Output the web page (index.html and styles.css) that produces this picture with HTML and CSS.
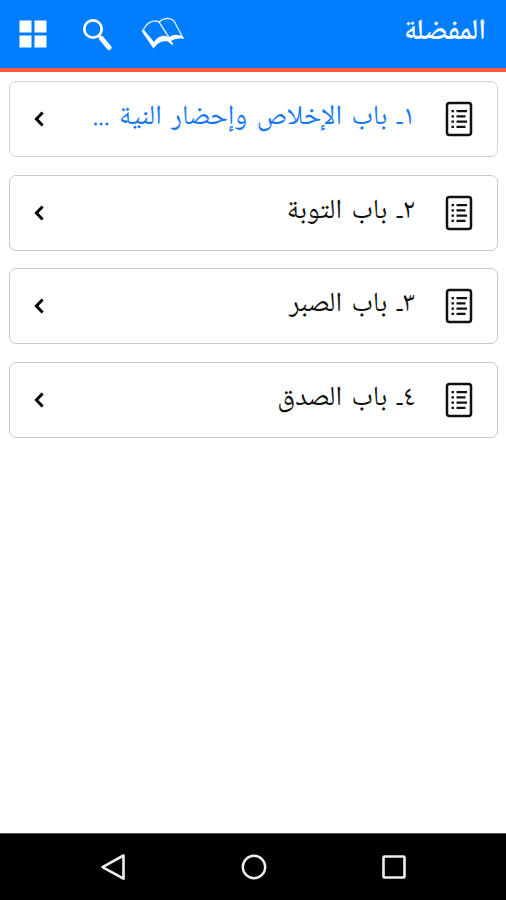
FILE: index.html
```html
<!DOCTYPE html>
<html lang="ar" dir="rtl">
<head>
<meta charset="utf-8">
<title>المفضلة</title>
<link rel="stylesheet" href="styles.css">
</head>
<body>
<svg width="0" height="0" class="defs">
  <symbol id="list" viewBox="0 0 28 36">
    <rect x="2" y="2" width="24" height="32" rx="2.5" fill="none" stroke="#111" stroke-width="2.5"/>
    <path d="M6.500 10.200h2.500M6.500 15.400h2.500M6.500 20.600h2.500M6.500 25.800h2.500M11.500 10.200h10.500M11.500 15.400h9M11.500 20.600h10.500M11.500 25.800h9" stroke="#111" stroke-width="2.300"/>
  </symbol>
  <symbol id="chevron" viewBox="0 0 12 18">
    <path d="M9.600 2.500 3.400 9l6.200 6.500" fill="none" stroke="#000" stroke-width="3"/>
  </symbol>
</svg>
<header class="bar">
  <h1 class="title">المفضلة</h1>
  <nav class="actions">
    <svg class="book" viewBox="0 0 44 34">
      <path d="M2 14C5 6 12 2 18 5C22 1 29 0 33 4L42 21M18 5l11 17M2 14l11 16" fill="none" stroke="#d6eaff" stroke-width="1.400" stroke-linejoin="round"/>
      <path d="M.5 14 3 13 13 25C17 19 23 17 28 20.500C32 17 37 17 42 20L43 22C37 21 33 22 30 24L32.500 27 31 28 27 24.500C21 23.500 17 25 12.500 31.500Z" fill="#fff"/>
    </svg>
    <svg class="search" viewBox="0 0 32 34">
      <circle cx="12" cy="12" r="8.700" fill="none" stroke="#fff" stroke-width="2.700"/>
      <path d="m18 19 2 2" stroke="#fff" stroke-width="3"/>
      <path d="m20.500 21.500 7.500 9" stroke="#fff" stroke-width="5" stroke-linecap="round"/>
    </svg>
    <svg class="grid" viewBox="0 0 28 28">
      <path d="M.5.5h12v12H.5zM15.500.5h12v12h-12zM.5 15.500h12v12H.5zM15.500 15.500h12v12h-12z" fill="#fff"/>
    </svg>
  </nav>
</header>
<main class="cards">
  <a class="card active"><svg class="list"><use href="#list"/></svg><span class="label">١ـ باب الإخلاص وإحضار النية ...</span><svg class="chevron"><use href="#chevron"/></svg></a>
  <a class="card"><svg class="list"><use href="#list"/></svg><span class="label">٢ـ باب التوبة</span><svg class="chevron"><use href="#chevron"/></svg></a>
  <a class="card"><svg class="list"><use href="#list"/></svg><span class="label">٣ـ باب الصبر</span><svg class="chevron"><use href="#chevron"/></svg></a>
  <a class="card"><svg class="list"><use href="#list"/></svg><span class="label">٤ـ باب الصدق</span><svg class="chevron"><use href="#chevron"/></svg></a>
</main>
<footer class="navbar">
  <svg viewBox="0 0 28 28"><path d="M23.500 2.500v23.200L2.500 14.100z" fill="none" stroke="#eee" stroke-width="2.600" stroke-linejoin="round"/></svg>
  <svg viewBox="0 0 28 28"><circle cx="14" cy="14" r="11.200" fill="none" stroke="#eee" stroke-width="2.400"/></svg>
  <svg viewBox="0 0 28 28"><rect x="3.500" y="3.500" width="21" height="21" rx="1" fill="none" stroke="#eee" stroke-width="2.600"/></svg>
</footer>
</body>
</html>
```

FILE: styles.css
```css
* { box-sizing: border-box; }
body {
  margin: 0;
  height: 900px;
  display: flex;
  flex-direction: column;
  background: #fff;
  font-family: "Noto Naskh Arabic", "Noto Sans Arabic", "DejaVu Sans", sans-serif;
  overflow: hidden;
}
svg { display: block; flex: none; }
.defs { position: absolute; }
.bar {
  height: 72px;
  flex: none;
  display: flex;
  justify-content: space-between;
  align-items: flex-start;
  padding: 0 20px 0 19px;
  background: #007eff;
  border-bottom: 4px solid #f95c3d;
}
.title {
  margin: 17px 0 0;
  font-size: 29px;
  line-height: 32px;
  font-weight: 600;
  color: #fff;
}
.actions { display: flex; }
.book { width: 44px; height: 34px; margin-top: 17px; }
.search { width: 32px; height: 34px; margin: 17px 28px 0 34px; }
.grid { width: 28px; height: 28px; margin-top: 20px; }
.cards {
  flex: 1;
  display: flex;
  flex-direction: column;
  gap: 17.600px;
  padding: 9px 8px 0 9px;
}
.card {
  height: 76px;
  flex: none;
  display: flex;
  align-items: center;
  padding: 0 24px 0 23px;
  border: 1.500px solid #c9c9c9;
  border-radius: 7px;
  color: #111;
}
.list { width: 28px; height: 36px; }
.label {
  flex: 1;
  margin: 0 30px 2px 0;
  font-size: 27.500px;
  line-height: 36px;
  word-spacing: 3.500px;
  white-space: nowrap;
}
.chevron { width: 12px; height: 18px; }
.active { border-color: #d2d2d2; }
.active .label { color: #1478f5; }
.navbar {
  height: 67px;
  flex: none;
  direction: ltr;
  display: flex;
  justify-content: space-between;
  align-items: center;
  padding: 0 98px 0 100px;
  background: #000;
  border-top: 1px solid #555;
}
.navbar svg { width: 28px; height: 28px; }
```
